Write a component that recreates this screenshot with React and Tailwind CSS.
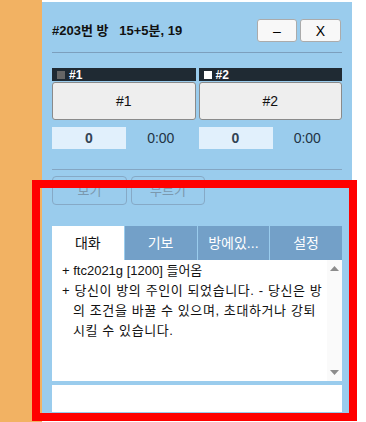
import React from "react"

const font = { fontFamily: '"Liberation Sans", "Noto Sans CJK KR", sans-serif' }

function PlayerBox({ label, dot }) {
  return (
    <div className="flex flex-col">
      {/* name bar */}
      <div className="flex items-center h-[13px] bg-[#1f2a33] px-[5px] gap-[4px]">
        <span className={`w-[8px] h-[8px] ${dot}`} />
        <span className="text-white text-[12px] font-bold leading-none">{label}</span>
      </div>
      <button className="mt-[1px] h-[38px] bg-[#eeeeee] border border-[#8a8a8a] rounded-[3px] text-[14px] text-[#111]">
        {label}
      </button>
      <div className="mt-[7px] flex h-[22px] items-center">
        <div className="w-[74px] h-full bg-[#e1f0fc] flex items-center justify-center text-[14px] font-bold text-[#334455]">
          0
        </div>
        <div className="flex-1 text-center text-[14px] text-[#223344]">0:00</div>
      </div>
    </div>
  )
}

export default function App() {
  const tabs = ["대화", "기보", "방에있...", "설정"]

  return (
    <div className="relative w-[366px] h-[422px] bg-white flex overflow-hidden" style={font}>
      {/* left strip */}
      <div className="w-[42px] h-full bg-[#f2b263]" />

      {/* room panel */}
      <div className="mt-[2px] w-[310px] h-[411px] bg-[#9acced] px-[10px] pt-[17px] flex flex-col">
        {/* header */}
        <div className="flex items-center justify-between">
          <span className="text-[13px] font-bold text-[#111] whitespace-pre">#203번 방   15+5분, 19</span>
          <div className="flex gap-[3px] mr-[1px]">
            <button className="w-[40px] h-[23px] bg-[#f8f8f8] border border-[#ababab] rounded-[3px] text-[14px] leading-none">
              –
            </button>
            <button className="w-[41px] h-[23px] bg-[#f8f8f8] border border-[#ababab] rounded-[3px] text-[14px] leading-none">
              X
            </button>
          </div>
        </div>

        <div className="mt-[10px] border-t border-[#7c9fbd]" />

        {/* players */}
        <div className="mt-[15px] grid grid-cols-2 gap-[3px]">
          <PlayerBox label="#1" dot="bg-[#666666]" />
          <PlayerBox label="#2" dot="bg-white" />
        </div>

        <div className="mt-[20px] border-t border-[#84a6c3]" />

        {/* faded actions */}
        <div className="mt-[6px] flex gap-[4px]">
          <button className="w-[75px] h-[29px] border border-[#86a9c6] rounded-[4px] text-[13px] text-[#7b98ae]">보기</button>
          <button className="w-[74px] h-[29px] border border-[#86a9c6] rounded-[4px] text-[13px] text-[#7b98ae]">무르기</button>
        </div>

        {/* tabs */}
        <div className="mt-[21px] grid grid-cols-4 gap-px h-[34px]">
          {tabs.map((t, i) => (
            <div
              key={t}
              className={`flex items-center justify-center text-[14px] ${
                i === 0 ? "bg-white text-[#111]" : "bg-[#73a0c8] text-white"
              }`}
            >
              {t}
            </div>
          ))}
        </div>

        {/* chat log */}
        <div className="h-[121px] bg-white flex">
          <div className="flex-1 pl-[10px] pt-[1px] pr-[2px] text-[13px] leading-[20px] text-[#111] break-all">
            <div className="pl-[11px] -indent-[11px]">+ ftc2021g [1200] 들어옴</div>
            <div className="pl-[11px] -indent-[11px] tracking-[0.6px]">
              + 당신이 방의 주인이 되었습니다. - 당신은 방의 조건을 바꿀 수 있으며, 초대하거나 강퇴시킬 수 있습니다.
            </div>
          </div>
          <div className="w-[15px] bg-[#fafafa] flex flex-col justify-between items-center py-[6px]">
            <svg width="9" height="5" viewBox="0 0 9 5">
              <path d="M0 5 L4.5 0 L9 5 Z" fill="#8c8c8c" />
            </svg>
            <svg width="9" height="5" viewBox="0 0 9 5">
              <path d="M0 0 L9 0 L4.5 5 Z" fill="#8c8c8c" />
            </svg>
          </div>
        </div>

        {/* input */}
        <div className="mt-[4px] h-[27px] bg-white" />
      </div>

      {/* annotation frame */}
      <div className="absolute left-[32px] top-[180px] w-[325px] h-[241px] border-[8px] border-[#ff0000] pointer-events-none" />
    </div>
  )
}
